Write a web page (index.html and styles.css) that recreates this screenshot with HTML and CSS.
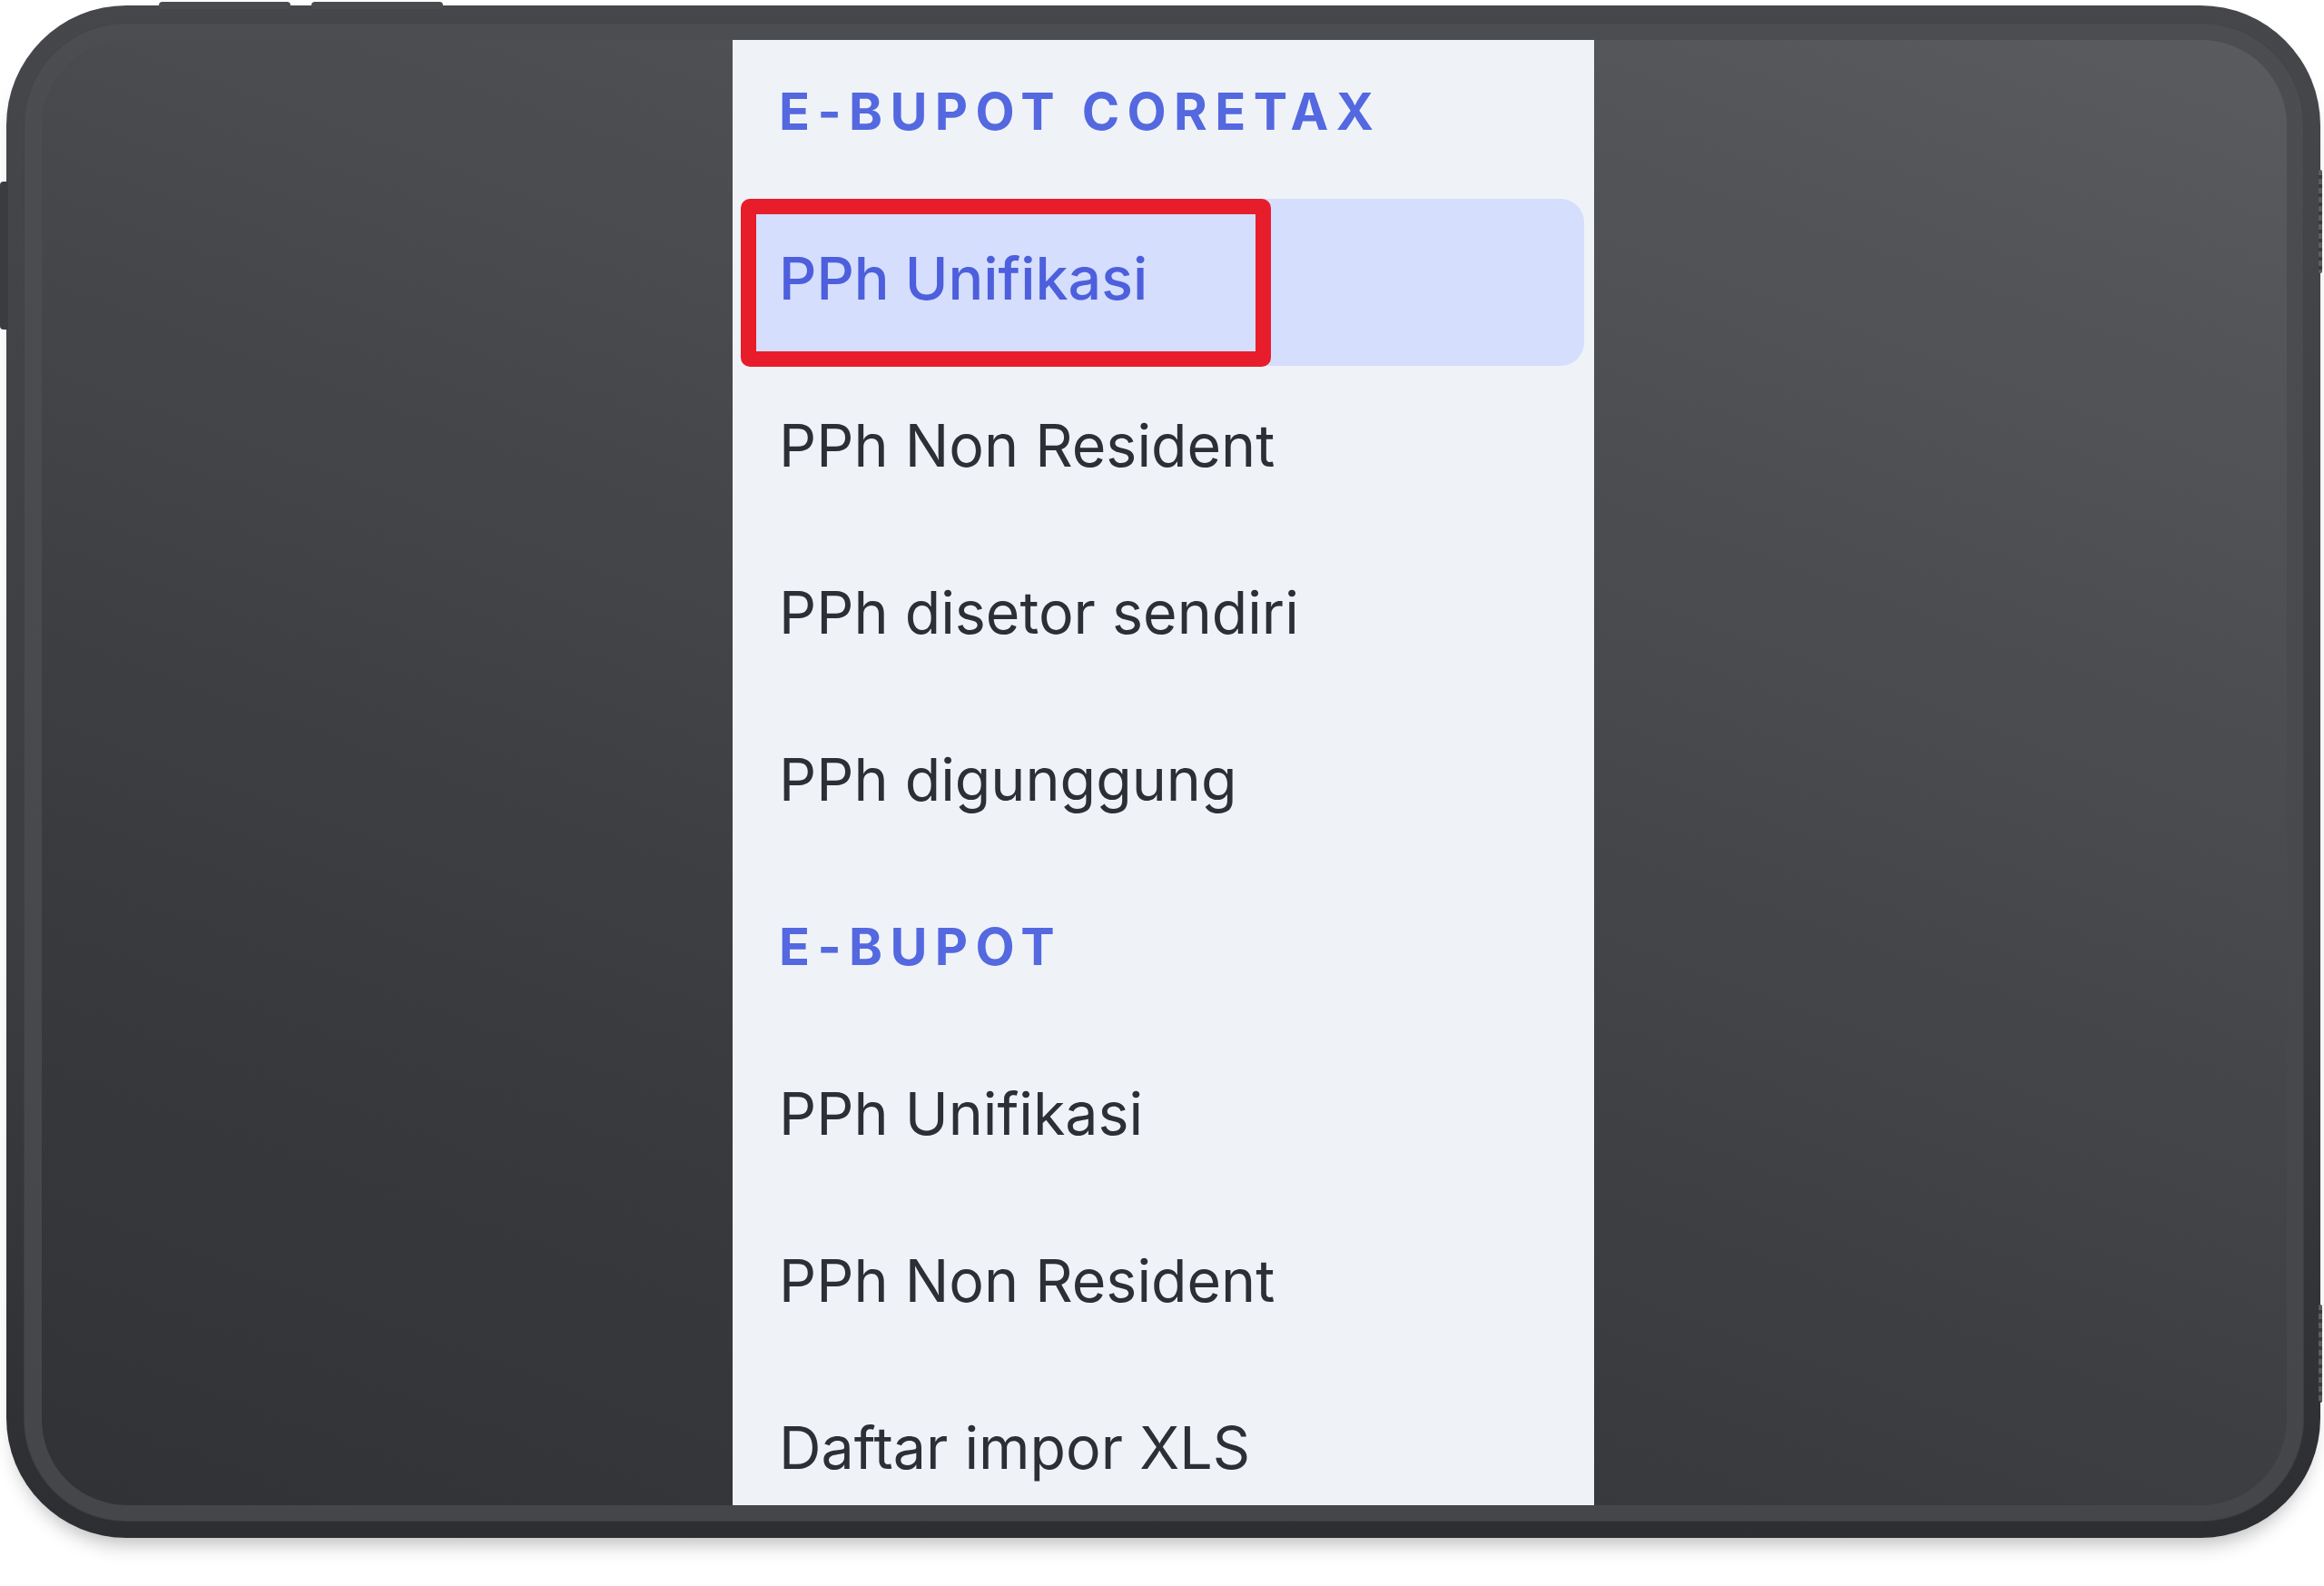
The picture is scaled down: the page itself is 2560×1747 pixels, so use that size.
FILE: index.html
```html
<!DOCTYPE html>
<html lang="id">
<head>
<meta charset="utf-8">
<title>E-Bupot Menu</title>
<link rel="stylesheet" href="styles.css">
</head>
<body>
<div class="page">
  <div class="device">
    <span class="btn-top btn-top-1"></span>
    <span class="btn-top btn-top-2"></span>
    <span class="btn-side"></span>
    <span class="grip grip-1"></span>
    <span class="grip grip-2"></span>
    <div class="frame">
      <div class="screen">
        <nav class="panel">
          <ul class="menu">
            <li class="menu-head">E-BUPOT CORETAX</li>
            <li class="menu-item active"><span class="label">PPh Unifikasi</span><span class="mark"></span></li>
            <li class="menu-item"><span class="label">PPh Non Resident</span></li>
            <li class="menu-item"><span class="label">PPh disetor sendiri</span></li>
            <li class="menu-item"><span class="label">PPh digunggung</span></li>
            <li class="menu-head">E-BUPOT</li>
            <li class="menu-item"><span class="label">PPh Unifikasi</span></li>
            <li class="menu-item"><span class="label">PPh Non Resident</span></li>
            <li class="menu-item"><span class="label">Daftar impor XLS</span></li>
          </ul>
        </nav>
      </div>
    </div>
  </div>
</div>
</body>
</html>
```
FILE: styles.css
```css
* { box-sizing: border-box; }

html, body {
  margin: 0;
  padding: 0;
  background: #ffffff;
  font-family: "Inter", "Noto Sans", "Liberation Sans", sans-serif;
}

.page {
  width: 2560px;
  height: 1747px;
  padding: 6px 0 0 7px;
  overflow: hidden;
}

.device {
  position: relative;
  width: 2549px;
  height: 1688px;
  padding: 19px 18px 18px 19px;
  border-radius: 132px;
  background: linear-gradient(180deg, #46474b 0%, #3c3d41 60%, #2d2e31 100%);
  box-shadow: 0 16px 22px -10px rgba(0, 0, 0, 0.28);
}

.btn-top {
  position: absolute;
  top: -4px;
  height: 8px;
  width: 145px;
  border-radius: 4px 4px 0 0;
  background: #4a4b4f;
}
.btn-top-1 { left: 168px; }
.btn-top-2 { left: 336px; }

.btn-side {
  position: absolute;
  left: -7px;
  top: 194px;
  width: 9px;
  height: 163px;
  border-radius: 4px 0 0 4px;
  background: #3b3c40;
}

.grip {
  position: absolute;
  right: -2px;
  width: 4px;
  border-radius: 2px;
  background: repeating-linear-gradient(180deg, #5b5c60 0 6px, #3a3b3f 6px 10px);
}
.grip-1 { top: 181px; height: 114px; }
.grip-2 { top: 1431px; height: 108px; }

.frame {
  width: 100%;
  height: 100%;
  padding: 19px 19px 18px 20px;
  border-radius: 113px;
  background: linear-gradient(180deg, #4c4d51 0%, #45464a 100%);
  box-shadow: inset 0 0 0 1px rgba(0, 0, 0, 0.12);
}

.screen {
  width: 100%;
  height: 100%;
  border-radius: 94px;
  overflow: hidden;
  display: flex;
  padding-left: 761px;
  background: linear-gradient(200deg, #5a5b5f 0%, #4a4b4f 35%, #3a3b3f 70%, #313236 100%);
}

.panel {
  width: 949px;
  height: 100%;
  background: #eff3f8;
  overflow: hidden;
}

.menu {
  list-style: none;
  margin: -9px 0 0 0;
  padding: 0;
}

.menu-head {
  height: 184px;
  display: flex;
  align-items: center;
  padding: 0 0 8px 51px;
  font-size: 56px;
  font-weight: 700;
  letter-spacing: 0.15em;
  color: #5468e0;
}

.menu-item {
  position: relative;
  height: 184px;
  margin: 0 11px 0 9px;
  display: flex;
  align-items: center;
  padding: 0 0 8px 42px;
  font-size: 64.5px;
  font-weight: 400;
  color: #2c2f36;
  border-radius: 26px;
}

.menu-item.active {
  background: #d5defc;
  color: #4d5fdc;
  font-weight: 500;
}

.mark {
  position: absolute;
  left: 0;
  top: 0;
  width: 584px;
  height: 185px;
  border: 17px solid #e81d2b;
  border-radius: 10px;
}
```
